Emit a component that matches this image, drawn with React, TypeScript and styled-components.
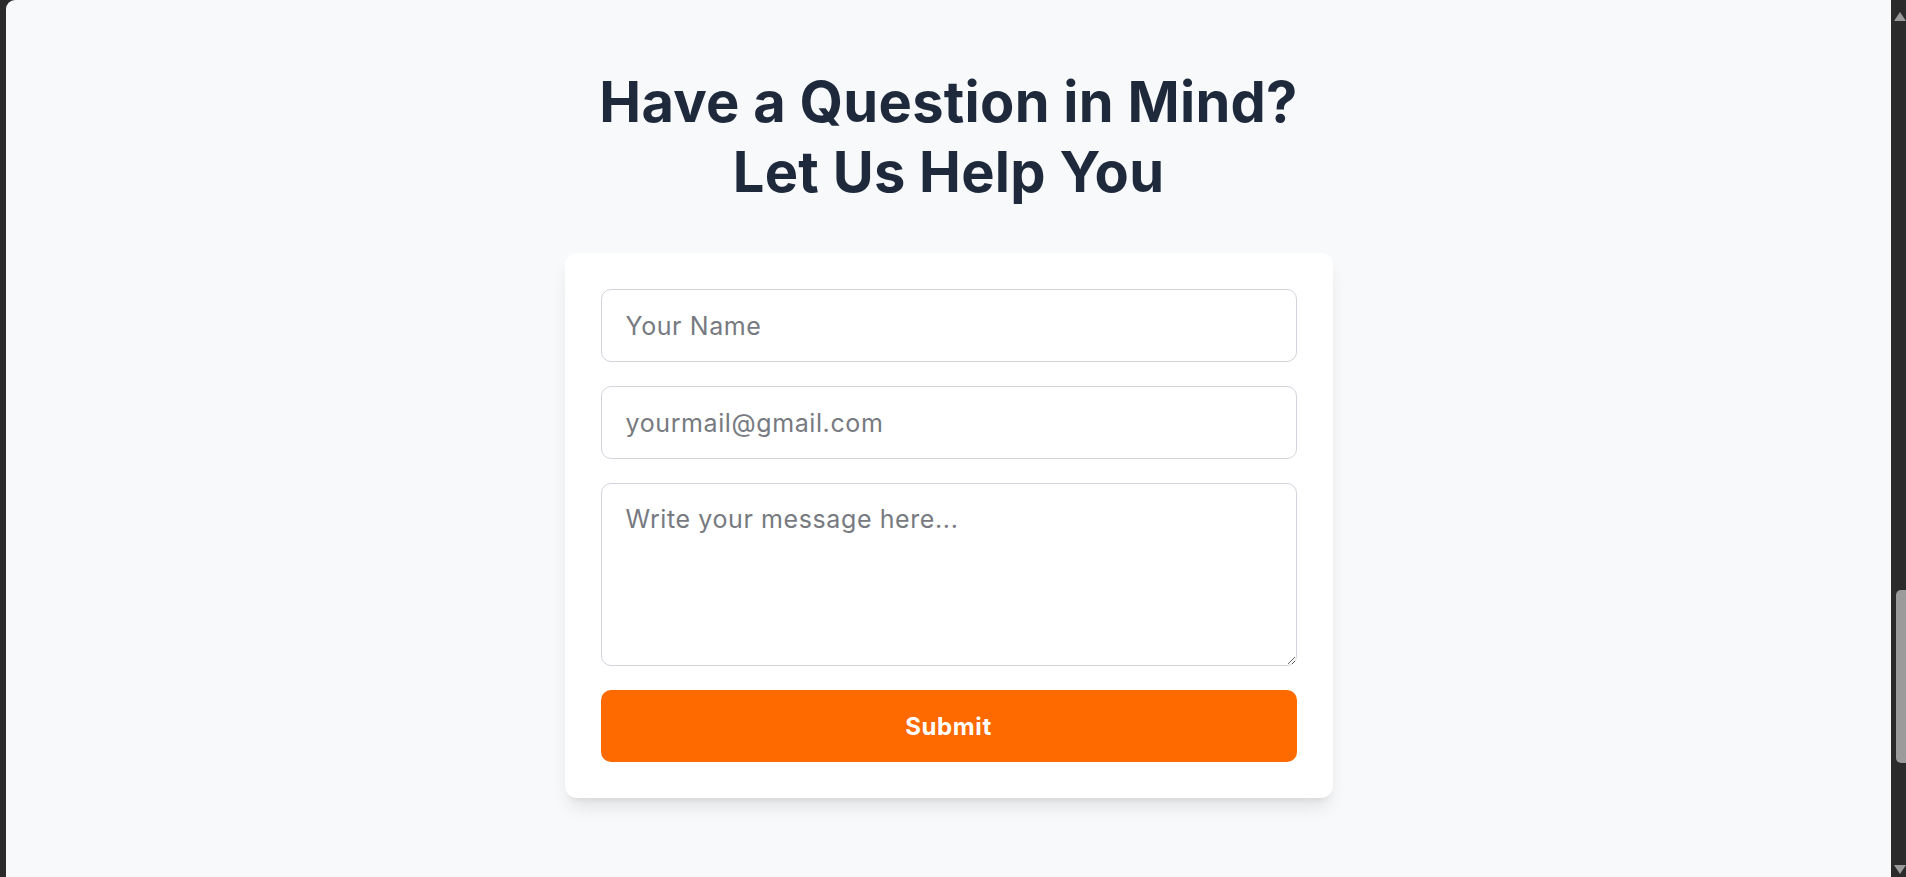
import React from "react";
import styled, { createGlobalStyle } from "styled-components";

const GlobalStyle = createGlobalStyle`
  html, body {
    margin: 0;
    height: 100%;
    overflow: hidden;
    background: #2b2b2b;
  }
  #root {
    height: 100%;
  }
  * {
    box-sizing: border-box;
  }
`;

const Frame = styled.div`
  display: flex;
  height: 100vh;
  padding-left: 6px;
  background: #2b2b2b;
`;

const Page = styled.main`
  flex: 1;
  display: flex;
  flex-direction: column;
  align-items: center;
  background: #f8f9fb;
  border-top-left-radius: 9px;
  padding-top: 67px;
  font-family: Inter, "Liberation Sans", sans-serif;
`;

const Title = styled.h1`
  margin: 0 0 46px;
  text-align: center;
  font-size: 56px;
  line-height: 70px;
  font-weight: 700;
  letter-spacing: 0.005em;
  color: #1e293b;
`;

const Card = styled.form`
  width: 768px;
  display: flex;
  flex-direction: column;
  gap: 24px;
  padding: 36px;
  background: #ffffff;
  border-radius: 12px;
  box-shadow: 0 12px 18px -4px rgba(0, 0, 0, 0.1), 0 5px 7px -5px rgba(0, 0, 0, 0.1);
`;

const fieldBase = `
  width: 100%;
  border: 1px solid #d1d5db;
  border-radius: 10px;
  padding: 0 24px;
  font-family: Inter, "Liberation Sans", sans-serif;
  font-size: 25px;
  letter-spacing: 0.6px;
  color: #1f2937;
  background: #ffffff;
  outline: none;
  &::placeholder {
    color: #777a80;
  }
`;

const Field = styled.input`
  ${fieldBase}
  height: 73px;
`;

const MessageField = styled.textarea`
  ${fieldBase}
  height: 183px;
  padding-top: 17px;
  line-height: 36px;
  resize: vertical;
`;

const SubmitButton = styled.button`
  height: 72px;
  border: none;
  border-radius: 10px;
  background: #ff6a00;
  color: #ffffff;
  font-family: Inter, "Liberation Sans", sans-serif;
  font-size: 24px;
  font-weight: 700;
  letter-spacing: 0.6px;
  cursor: pointer;
`;

const ScrollTrack = styled.div`
  width: 15px;
  display: flex;
  flex-direction: column;
  align-items: flex-end;
  background: #2b2b2b;
`;

const Arrow = styled.div<{ down?: boolean }>`
  width: 0;
  height: 0;
  margin: ${({ down }) => (down ? "auto 0 3px" : "12px 0 0")};
  border-left: 6px solid transparent;
  border-right: 6px solid transparent;
  ${({ down }) =>
    down ? "border-top: 9px solid #9a9a9a;" : "border-bottom: 9px solid #9a9a9a;"}
`;

const Thumb = styled.div`
  width: 10px;
  height: 173px;
  margin-top: 569px;
  border-radius: 5px 0 0 5px;
  background: #9b9b9b;
`;

export default function App() {
  return (
    <>
      <GlobalStyle />
      <Frame>
        <Page>
          <Title>
            Have a Question in Mind?
            <br />
            Let Us Help You
          </Title>
          <Card onSubmit={(e) => e.preventDefault()}>
            <Field type="text" placeholder="Your Name" />
            <Field type="email" placeholder="yourmail@gmail.com" />
            <MessageField placeholder="Write your message here..." />
            <SubmitButton type="submit">Submit</SubmitButton>
          </Card>
        </Page>
        <ScrollTrack>
          <Arrow />
          <Thumb />
          <Arrow down />
        </ScrollTrack>
      </Frame>
    </>
  );
}
